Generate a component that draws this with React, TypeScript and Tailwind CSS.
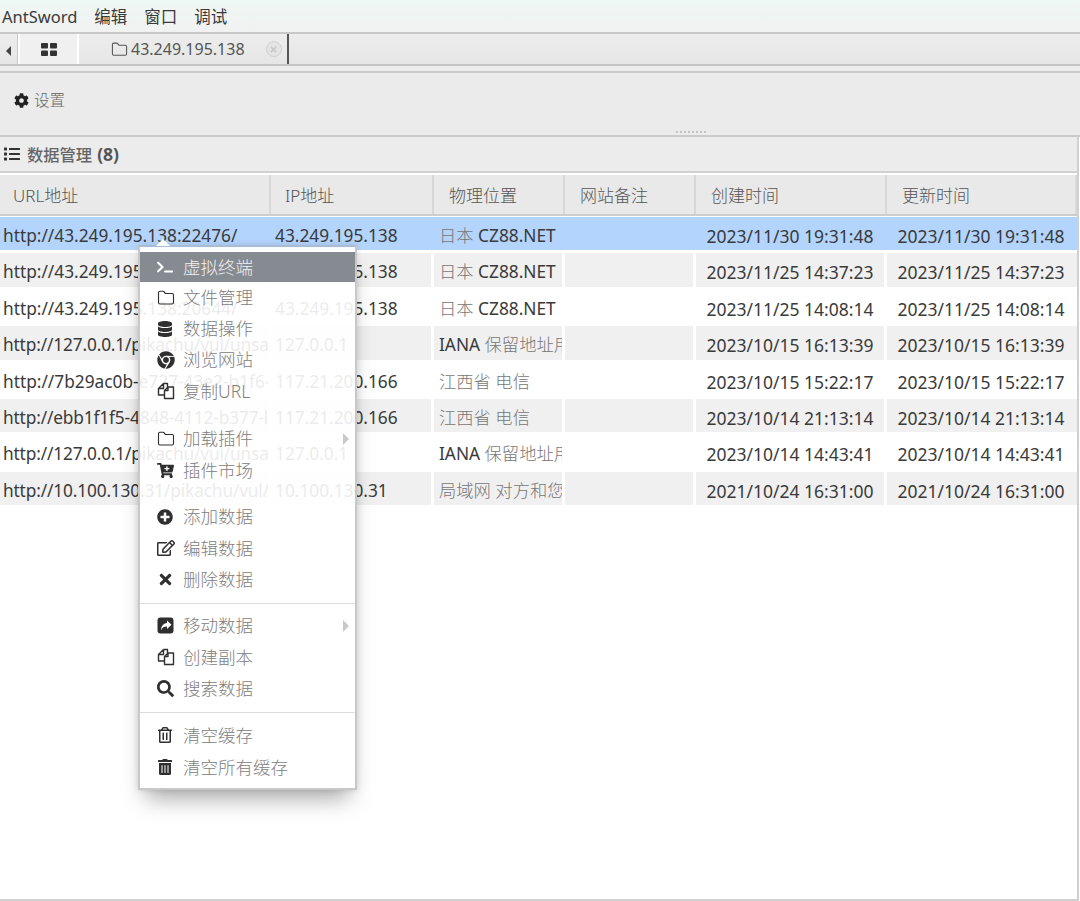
import type { ReactNode } from "react";
import { Folder } from "lucide-react";
import {
  FaChrome,
  FaCog,
  FaDatabase,
  FaList,
  FaPlusCircle,
  FaRegEdit,
  FaSearch,
  FaTimes,
  FaTrashAlt,
  FaCartPlus,
  FaRegTrashAlt,
  FaTerminal,
} from "react-icons/fa";

const font = "font-['Noto_Sans','Noto_Sans_CJK_SC',sans-serif]";

const rows = [
  ["http://43.249.195.138:22476/", "43.249.195.138", "日本 CZ88.NET", "2023/11/30 19:31:48"],
  ["http://43.249.195.138:20644/", "43.249.195.138", "日本 CZ88.NET", "2023/11/25 14:37:23"],
  ["http://43.249.195.138:20644/", "43.249.195.138", "日本 CZ88.NET", "2023/11/25 14:08:14"],
  ["http://127.0.0.1/pikachu/vul/unsa", "127.0.0.1", "IANA 保留地址用", "2023/10/15 16:13:39"],
  ["http://7b29ac0b-e727-43e2-b1f6-", "117.21.200.166", "江西省 电信", "2023/10/15 15:22:17"],
  ["http://ebb1f1f5-4848-4112-b377-l", "117.21.200.166", "江西省 电信", "2023/10/14 21:13:14"],
  ["http://127.0.0.1/pikachu/vul/unsa", "127.0.0.1", "IANA 保留地址用", "2023/10/14 14:43:41"],
  ["http://10.100.130.31/pikachu/vul/", "10.100.130.31", "局域网 对方和您", "2021/10/24 16:31:00"],
];

const headers = [
  { label: "URL地址", w: "w-[271px]", pl: "pl-[13px]" },
  { label: "IP地址", w: "w-[163px]", pl: "pl-[14px]" },
  { label: "物理位置", w: "w-[131px]", pl: "pl-[15px]" },
  { label: "网站备注", w: "w-[131px]", pl: "pl-[15px]" },
  { label: "创建时间", w: "w-[191px]", pl: "pl-[15px]" },
  { label: "更新时间", w: "w-[190px]", pl: "pl-[15px]" },
];

function CopyIcon() {
  return (
    <svg width="18" height="18" viewBox="0 0 18 18" fill="none" stroke="currentColor" strokeWidth="1.4" strokeLinejoin="round">
      <path d="M11 5H16.5V16.5H7.5V8.5Z M11 5V8.5H7.5" />
      <path d="M6.5 1.5H10.5V5 M6.5 1.5L1.5 6.5V13H7.5 M6.5 1.5V6.5H1.5" />
    </svg>
  );
}

function MoveIcon() {
  return (
    <svg width="17" height="17" viewBox="0 0 17 17">
      <rect x="0.5" y="0.5" width="16" height="16" rx="3" fill="currentColor" />
      <path fill="#fff" d="M10 3.5l4.5 4.2-4.5 4.2V9.6C7 9.6 5.2 10.6 4 13.5c0-4 2-6.8 6-7.4z" />
    </svg>
  );
}

function GridIcon() {
  return (
    <svg width="16" height="13" viewBox="0 0 16 13" fill="currentColor">
      <rect x="0" y="0" width="7" height="5.5" rx="1" />
      <rect x="9" y="0" width="7" height="5.5" rx="1" />
      <rect x="0" y="7.5" width="7" height="5.5" rx="1" />
      <rect x="9" y="7.5" width="7" height="5.5" rx="1" />
    </svg>
  );
}

// CJK parts of a cell are drawn lighter than the latin parts, as in the app
function Mixed({ text }: { text: string }) {
  return (
    <>
      {text.split(/([\u4e00-\u9fff]+)/).map((part, i) =>
        /[\u4e00-\u9fff]/.test(part) ? (
          <span key={i} className="font-light text-[#777]">
            {part}
          </span>
        ) : (
          <span key={i}>{part}</span>
        ),
      )}
    </>
  );
}

function MenuItem({ icon, label, h, active, arrow }: { icon: ReactNode; label: string; h: string; active?: boolean; arrow?: boolean }) {
  return (
    <div className={`flex items-center pl-[17px] ${h} ${active ? "bg-[#868a91] text-[#f2f2f2]" : "text-[#808080]"}`}>
      <span className={`flex w-[26px] items-center ${active ? "text-white" : "text-[#2f2f2f]"}`}>{icon}</span>
      <span className="text-[17.5px] font-light">{label}</span>
      {arrow && <span className="ml-auto mr-[6px] h-0 w-0 border-y-[6px] border-l-[6px] border-y-transparent border-l-[#c9c9c9]" />}
    </div>
  );
}

function Sep() {
  return <div className="mb-[6px] mt-[8px] h-px bg-[#dcdcdc]" />;
}

export default function App() {
  return (
    <div className={`relative h-[901px] w-[1080px] overflow-hidden bg-white ${font} text-[#333]`}>
      {/* menu bar */}
      <div className="flex h-[34px] items-center gap-[17px] border-b-2 border-[#c9c9c9] bg-gradient-to-b from-[#eef8f5] to-[#f1f1f1] pl-[2px] pt-[2px] text-[16.5px] text-[#3a3a3a]">
        <span>AntSword</span>
        <span>编辑</span>
        <span>窗口</span>
        <span>调试</span>
      </div>

      {/* tabs */}
      <div className="flex h-[32px] border-b-2 border-[#c4c4c4] bg-gradient-to-b from-[#ededed] to-[#e6e6e6]">
        <div className="flex w-[18px] items-center justify-center border-r border-[#c8c8c8] pt-[4px]">
          <span className="h-0 w-0 border-y-[5px] border-r-[5px] border-y-transparent border-r-[#444]" />
        </div>
        <div className="flex w-[61px] justify-center border-x-2 border-white bg-[#f0f0f0] pt-[9px] text-[#333]">
          <GridIcon />
        </div>
        <div className="flex w-[210px] items-center border-r-2 border-[#555] pl-[32px] text-[#555]">
          <Folder size={17} strokeWidth={1.5} className="mr-[3px]" />
          <span className="text-[16px]">43.249.195.138</span>
          <span className="ml-[21px] flex h-[16px] w-[16px] items-center justify-center rounded-full border border-[#d0d0d0] bg-[#e4e4e4] text-[#c8c8c8]">
            <FaTimes size={9} />
          </span>
        </div>
      </div>
      <div className="h-[5px] bg-[#ececec]" />

      {/* toolbar */}
      <div className="relative flex h-[66px] items-center border-y-2 border-[#cacaca] bg-[#ebebeb] pl-[14px]">
        <div className="flex items-center gap-[5px] pb-[7px] text-[15.5px] font-light text-[#666]">
          <FaCog size={15} className="text-[#222]" />
          <span>设置</span>
        </div>
        <div className="absolute bottom-[2px] left-[676px] flex gap-[2px]">
          {[0, 1, 2, 3, 4, 5, 6, 7].map((d) => (
            <span key={d} className="h-[2px] w-[2px] bg-[#c4c4c4]" />
          ))}
        </div>
      </div>

      {/* panel with the grid */}
      <div className="h-[764px] w-[1079px] border-b-2 border-r-2 border-[#d0d0d0]">
        <div className="flex h-[36px] items-center gap-[7px] border-b-2 border-[#d0d0d0] bg-[#ececec] pl-[4px] text-[16.3px] font-medium text-[#666]">
          <FaList size={16} className="text-[#333]" />
          <span>
            数据管理<span className="ml-[5px] text-[17.5px] font-bold text-[#555]">(8)</span>
          </span>
        </div>

        <div className="mt-[2px] flex h-[41px] border-b-2 border-[#cdcdcd] bg-[#e9e9e9]">
          {headers.map((h) => (
            <div key={h.label} className={`flex items-center border-r-2 border-[#d8d8d8] pt-[3px] text-[17px] font-light text-[#555] ${h.w} ${h.pl}`}>
              {h.label}
            </div>
          ))}
        </div>
        <div className="mt-[1px]">
          {rows.map((r, i) => {
            const gap = i === 0 ? "border-[#b3d4fd]" : "border-white";
            const tight = r[0].length > 31 ? "tracking-[-0.15px]" : "";
            return (
              <div
                key={i}
                className={`flex h-[36.4px] border-b-[3px] border-white text-[17.3px] leading-[38px] text-[#3a3a3a] ${i === 0 ? "bg-[#b3d4fd]" : i % 2 === 1 ? "bg-[#f0f0f0]" : "bg-white"}`}
              >
                <div className={`w-[271px] overflow-hidden whitespace-nowrap border-r-[3px] pl-[3px] ${tight} ${gap}`}>{r[0]}</div>
                <div className={`w-[163px] overflow-hidden whitespace-nowrap border-r-[3px] pl-[4px] ${gap}`}>{r[1]}</div>
                <div className={`w-[131px] overflow-hidden whitespace-nowrap border-r-[3px] pl-[5px] ${gap}`}>
                  <Mixed text={r[2]} />
                </div>
                <div className={`w-[131px] border-r-[3px] ${gap}`} />
                <div className={`w-[191px] whitespace-nowrap border-r-[3px] text-center text-[17.5px] ${gap}`}>{r[3]}</div>
                <div className="w-[190px] whitespace-nowrap pr-[2px] text-center text-[17.5px]">{r[3]}</div>
              </div>
            );
          })}
        </div>
      </div>

      {/* context menu */}
      <div className="absolute left-[138px] top-[245px] w-[219px] border-2 border-[#c8c8c8] border-t-[#a9bcd3] bg-white/90 pt-[5px] shadow-[0_16px_22px_-8px_rgba(0,0,0,0.35),0_0_6px_rgba(0,0,0,0.12)]">
        <span className="absolute -top-[8px] left-[16px] h-0 w-0 border-x-[7px] border-b-[7px] border-x-transparent border-b-white" />
        <MenuItem h="h-[30px]" active icon={<FaTerminal size={16} />} label="虚拟终端" />
        <MenuItem h="h-[31px]" icon={<Folder size={18} strokeWidth={1.5} />} label="文件管理" />
        <MenuItem h="h-[31px]" icon={<FaDatabase size={16} />} label="数据操作" />
        <MenuItem h="h-[31px]" icon={<FaChrome size={18} />} label="浏览网站" />
        <MenuItem h="h-[32px]" icon={<CopyIcon />} label="复制URL" />
        <div className="h-[16px]" />
        <MenuItem h="h-[31px]" arrow icon={<Folder size={18} strokeWidth={1.5} />} label="加载插件" />
        <MenuItem h="h-[32px]" icon={<FaCartPlus size={17} />} label="插件市场" />
        <div className="h-[15px]" />
        <MenuItem h="h-[31px]" icon={<FaPlusCircle size={16} />} label="添加数据" />
        <MenuItem h="h-[32px]" icon={<FaRegEdit size={18} />} label="编辑数据" />
        <MenuItem h="h-[31px]" icon={<FaTimes size={17} />} label="删除数据" />
        <Sep />
        <MenuItem h="h-[31px]" arrow icon={<MoveIcon />} label="移动数据" />
        <MenuItem h="h-[32px]" icon={<CopyIcon />} label="创建副本" />
        <MenuItem h="h-[31px]" icon={<FaSearch size={17} />} label="搜索数据" />
        <Sep />
        <MenuItem h="h-[32px]" icon={<FaRegTrashAlt size={16} />} label="清空缓存" />
        <MenuItem h="h-[32px]" icon={<FaTrashAlt size={16} />} label="清空所有缓存" />
        <div className="h-[5px]" />
      </div>
    </div>
  );
}
